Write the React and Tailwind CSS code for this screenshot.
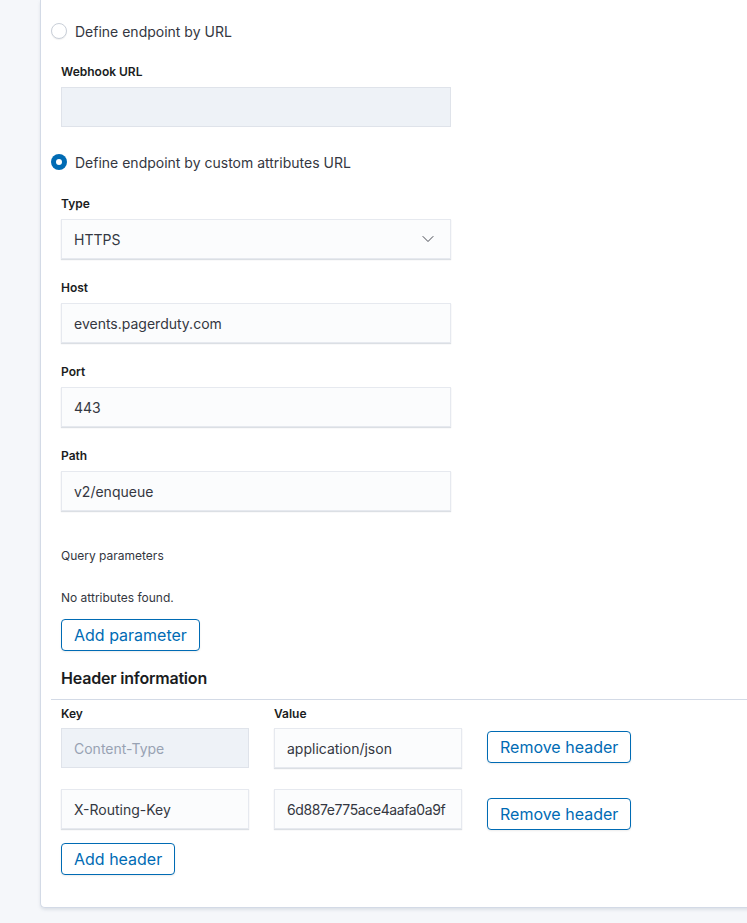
import { ChevronDown } from 'lucide-react';

const font = { fontFamily: 'Inter, "Liberation Sans", sans-serif' };

const Radio = ({ checked, label, className = '' }) => (
  <div className={`flex items-center h-5 ${className}`}>
    {checked ? (
      <span className="w-4 h-4 rounded-full bg-[#006bb4] flex items-center justify-center">
        <span className="w-[6px] h-[6px] rounded-full bg-white" />
      </span>
    ) : (
      <span className="w-4 h-4 rounded-full bg-white border border-[#c9cfd8] shadow-[0_1px_1px_rgba(0,0,0,0.06)]" />
    )}
    <span className="ml-2 text-[14px] text-[#343741]">{label}</span>
  </div>
);

const Label = ({ children, className = '' }) => (
  <div className={`h-[18px] leading-[18px] text-[12px] font-semibold text-[#1a1c21] ${className}`}>{children}</div>
);

const Input = ({ value, disabled, className = 'w-[390px]', textClass = '', children }) => (
  <div
    className={`h-10 flex items-center pl-3 pr-3 overflow-hidden text-[14px] border ${
      disabled
        ? 'bg-[#eef2f7] border-[#dfe3ea] text-[#98a2b3]'
        : 'bg-[#fbfcfd] border-[#e6e9ef] text-[#343741] shadow-[0_1px_1px_rgba(152,162,179,0.35)]'
    } ${className}`}
  >
    <span className={`flex-1 whitespace-nowrap ${textClass}`}>{value}</span>
    {children}
  </div>
);

const Field = ({ label, value, className = 'mt-5', select, disabled }) => (
  <div className={className}>
    <Label>{label}</Label>
    <Input value={value} disabled={disabled} className="w-[390px] mt-[6px]">
      {select && <ChevronDown className="w-5 h-5 text-[#343741]" strokeWidth={1.1} />}
    </Input>
  </div>
);

const Button = ({ children, className = '' }) => (
  <button className={`h-8 px-3 rounded-[4px] border border-[#006bb4] bg-white text-[#006bb4] text-[16px] leading-none shadow-[0_1px_2px_rgba(0,0,0,0.08)] ${className}`}>
    {children}
  </button>
);

const headers = [
  { key: 'Content-Type', value: 'application/json', locked: true, offset: 'mt-[3px]', tight: '' },
  { key: 'X-Routing-Key', value: '6d887e775ace4aafa0a9f', locked: false, offset: 'mt-[9px]', tight: 'tracking-[-0.4px]' },
];

export default function App() {
  return (
    <div className="w-[747px] h-[923px] overflow-hidden bg-[#f5f7fa]" style={font}>
      <div className="ml-[40px] w-[740px] bg-white border-l border-b border-[#d3dae6] rounded-bl-[5px] shadow-[0_2px_3px_rgba(152,162,179,0.25)] pl-[10px] pt-[21px] pb-[32px]">
        <Radio label="Define endpoint by URL" />
        <div className="ml-[10px]">
          <Field label="Webhook URL" value="" disabled className="mt-[22px]" />
        </div>

        <Radio checked label="Define endpoint by custom attributes URL" className="mt-[25px]" />
        <div className="ml-[10px]">
          <Field label="Type" value="HTTPS" select className="mt-[23px]" />
          <Field label="Host" value="events.pagerduty.com" />
          <Field label="Port" value="443" />
          <Field label="Path" value="v2/enqueue" />

          <div className="mt-[36px] h-[18px] leading-[18px] text-[12px] text-[#343741]">Query parameters</div>
          <div className="mt-[24px] h-[18px] leading-[18px] text-[12px] text-[#343741]">No attributes found.</div>
          <Button className="mt-[12px]">Add parameter</Button>

          <div className="mt-[15px] h-6 leading-6 text-[16px] font-semibold tracking-[-0.2px] text-[#1a1c21]">Header information</div>
        </div>

        <div className="mt-[9px] h-px bg-[#d3dae6]" />

        <div className="ml-[10px]">
          <div className="mt-[5px] flex gap-[25px]">
            <Label className="w-[188px]">Key</Label>
            <Label>Value</Label>
          </div>
          {headers.map((h, i) => (
            <div key={h.key} className={`flex items-start gap-[25px] ${i === 0 ? 'mt-[5px]' : 'mt-[21px]'}`}>
              <Input value={h.key} disabled={h.locked} className="w-[188px]" />
              <Input value={h.value} className="w-[188px]" textClass={h.tight} />
              <Button className={h.offset}>Remove header</Button>
            </div>
          ))}
          <Button className="mt-[13px]">Add header</Button>
        </div>
      </div>
    </div>
  );
}
